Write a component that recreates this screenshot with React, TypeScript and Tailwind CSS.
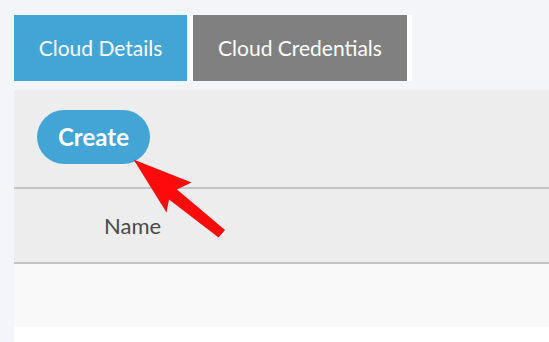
export default function App() {
  const font = { fontFamily: "Lato, 'Open Sans', sans-serif" };
  return (
    <div className="relative w-[549px] h-[342px] overflow-hidden bg-[#f4f5f8] pl-[14px] pt-[15px] flex flex-col" style={font}>
      <div className="flex w-[398px] h-[66px] gap-[6px] bg-white">
        <div className="w-[173px] bg-[#42a5d6] text-white text-[21px] flex items-center justify-center">Cloud Details</div>
        <div className="w-[214px] bg-[#808080] text-white text-[21px] flex items-center justify-center">Cloud Credentials</div>
      </div>
      <div className="mt-[9px] flex-1 flex flex-col bg-white">
        <div className="h-[97px] bg-[#ededed] pl-[23px] pt-[20px]">
          <button className="w-[113px] h-[54px] rounded-full bg-[#42a5d6] text-white text-[24px] font-bold">Create</button>
        </div>
        <div className="h-[2px] bg-[#c4c4c4]" />
        <div className="h-[73px] bg-[#ededed] flex items-center pl-[90px] text-[22px] text-[#4a4a4a]">Name</div>
        <div className="h-[2px] bg-[#c4c4c4]" />
        <div className="h-[63px] bg-[#f9f9f9]" />
      </div>
      <svg className="absolute left-0 top-0" width="549" height="342" viewBox="0 0 549 342">
        <polygon
          points="133.5,159.5 191.5,182.5 177,189.5 225,230 218.5,237.5 169,199.5 166.5,212.5"
          fill="#ff0a0a"
        />
      </svg>
    </div>
  );
}
